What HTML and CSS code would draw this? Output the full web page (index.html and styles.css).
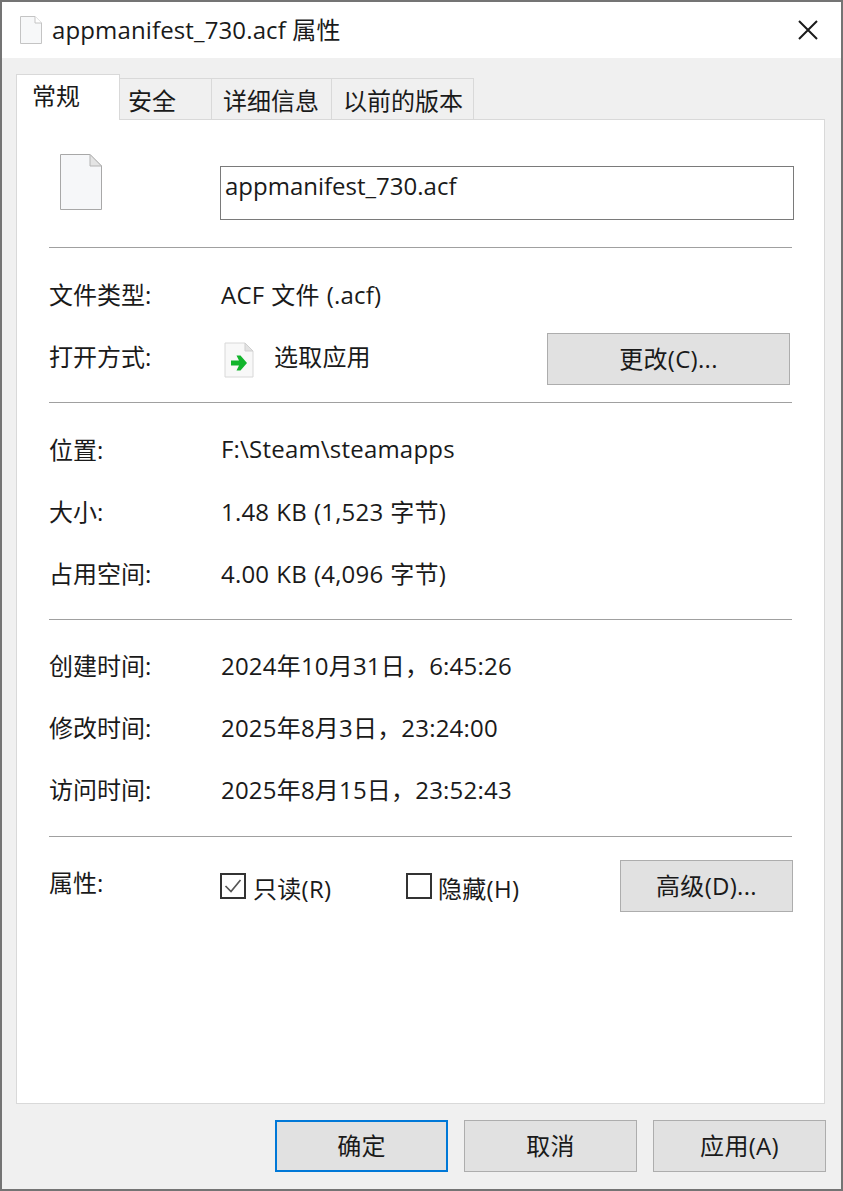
FILE: index.html
```html
<!DOCTYPE html>
<html lang="zh-CN">
<head>
    <meta charset="UTF-8">
    <title>appmanifest_730.acf 属性</title>
    <link rel="stylesheet" href="styles.css">
</head>
<body>
    <div class="window">
        <div class="titlebar">
            <svg class="title-icon" viewBox="0 0 22 28">
                <path d="M0.5 0.5H15L21.5 7V27.5H0.5Z" fill="#f7f8f9" stroke="#c4c4c4"/>
                <path d="M15 0.5V7H21.5" fill="#fff" stroke="#c4c4c4"/>
            </svg>
            <span class="title-text">appmanifest_730.acf 属性</span>
            <svg class="close-icon" viewBox="0 0 20 20">
                <path d="M1 1L19 19M19 1L1 19" stroke="#1a1a1a" stroke-width="2" fill="none"/>
            </svg>
        </div>
        <div class="content">
            <div class="tabs">
                <div class="tab active">常规</div>
                <div class="tab tab-security">安全</div>
                <div class="tab tab-details">详细信息</div>
                <div class="tab tab-versions">以前的版本</div>
            </div>
            <div class="panel">
                <div class="section name-section">
                    <svg class="file-icon" viewBox="0 0 42 56">
                        <path d="M0.5 0.5H30L41.5 12V55.5H0.5Z" fill="#f6f7f9" stroke="#a8a8a8"/>
                        <path d="M30 0.5V12H41.5Z" fill="#e4e4e4" stroke="#b4b4b4"/>
                    </svg>
                    <div class="name-input">appmanifest_730.acf</div>
                </div>
                <div class="section">
                    <div class="row">
                        <div class="label">文件类型:</div>
                        <div class="value">ACF 文件 (.acf)</div>
                    </div>
                    <div class="row">
                        <div class="label">打开方式:</div>
                        <div class="value open-with">
                            <svg class="app-icon" viewBox="0 0 30 36">
                                <path d="M1 1H21L29 9V35H1Z" fill="#f8f8f8" stroke="#d8d8d8"/>
                                <path d="M21 1V9H29Z" fill="#e2e2e2" stroke="#cfcfcf"/>
                                <path d="M7 18.500H15L12.500 13.500H16.500L23 21L16.500 28.500H12.500L15 23.500H7Z" fill="#12b52c"/>
                            </svg>
                            <span>选取应用</span>
                        </div>
                        <button class="btn btn-change">更改(C)...</button>
                    </div>
                </div>
                <div class="section">
                    <div class="row">
                        <div class="label">位置:</div>
                        <div class="value">F:\Steam\steamapps</div>
                    </div>
                    <div class="row">
                        <div class="label">大小:</div>
                        <div class="value">1.48 KB (1,523 字节)</div>
                    </div>
                    <div class="row">
                        <div class="label">占用空间:</div>
                        <div class="value">4.00 KB (4,096 字节)</div>
                    </div>
                </div>
                <div class="section dates">
                    <div class="row">
                        <div class="label">创建时间:</div>
                        <div class="value">2024年10月31日，6:45:26</div>
                    </div>
                    <div class="row">
                        <div class="label">修改时间:</div>
                        <div class="value">2025年8月3日，23:24:00</div>
                    </div>
                    <div class="row">
                        <div class="label">访问时间:</div>
                        <div class="value">2025年8月15日，23:52:43</div>
                    </div>
                </div>
                <div class="attrs">
                    <div class="label attrs-label">属性:</div>
                    <div class="check check-readonly">
                        <span class="box">
                            <svg viewBox="0 0 22 22"><path d="M3.500 11L9 16.500L18.500 5" stroke="#555" stroke-width="1.700" fill="none"/></svg>
                        </span>
                        <span class="check-text">只读(R)</span>
                    </div>
                    <div class="check check-hidden">
                        <span class="box"></span>
                        <span class="check-text">隐藏(H)</span>
                    </div>
                    <button class="btn btn-advanced">高级(D)...</button>
                </div>
            </div>
            <div class="footer">
                <button class="btn btn-footer default">确定</button>
                <button class="btn btn-footer">取消</button>
                <button class="btn btn-footer">应用(A)</button>
            </div>
        </div>
    </div>
</body>
</html>
```

FILE: styles.css
```css
* {
    box-sizing: border-box;
}
html, body {
    height: 100%;
}
body {
    margin: 0;
    font-family: "Open Sans", "Noto Sans CJK SC", sans-serif;
    font-size: 24px;
    color: #1a1a1a;
    background: #fff;
}
.window {
    height: 100vh;
    display: flex;
    flex-direction: column;
    border: 2px solid #747474;
}
.titlebar {
    height: 56px;
    flex: none;
    display: flex;
    align-items: center;
    background: #fff;
    padding-left: 18px;
}
.title-icon {
    width: 22px;
    height: 28px;
    margin-right: 10px;
}
.title-text {
    flex: 1;
    margin-top: -3px;
    letter-spacing: 0.13px;
}
.close-icon {
    width: 20px;
    height: 20px;
    margin-right: 23px;
}
.content {
    flex: 1;
    display: flex;
    flex-direction: column;
    background: #f0f0f0;
    padding: 16px 16px 0 14px;
}
.tabs {
    display: flex;
    align-items: flex-end;
    height: 46px;
    flex: none;
    margin-bottom: -1px;
    position: relative;
    z-index: 1;
}
.tab {
    height: 42px;
    border: 1px solid #d9d9d9;
    border-left: none;
    border-bottom: none;
    line-height: 43px;
    white-space: nowrap;
}
.tab.active {
    width: 104px;
    height: 46px;
    background: #fff;
    border-left: 1px solid #d9d9d9;
    line-height: 42px;
    padding-left: 15px;
}
.tab-security {
    width: 92px;
    padding-left: 8px;
}
.tab-details {
    width: 120px;
    padding-left: 11px;
}
.tab-versions {
    width: 142px;
    padding-left: 11px;
}
.panel {
    flex: 1;
    background: #fff;
    border: 1px solid #d9d9d9;
    padding: 0 32px;
}
.section {
    border-bottom: 1px solid #a0a0a0;
    padding: 16px 0 14px;
}
.dates {
    padding: 15px 0;
}
.name-section {
    height: 128px;
    padding: 0;
    display: flex;
}
.file-icon {
    width: 42px;
    height: 56px;
    margin: 34px 0 0 11px;
}
.name-input {
    width: 574px;
    height: 54px;
    margin: 46px -2px 0 118px;
    border: 1px solid #7a7a7a;
    padding: 2px 4px;
}
.row {
    height: 62px;
    display: flex;
    align-items: center;
}
.label {
    width: 172px;
    flex: none;
    margin-top: -4px;
}
.value {
    flex: 1;
    margin-top: -4px;
    letter-spacing: 0.2px;
    word-spacing: 0.6px;
}
.open-with {
    display: flex;
    align-items: center;
}
.app-icon {
    width: 30px;
    height: 36px;
    margin: 10px 20px 0 3px;
}
.btn {
    height: 52px;
    border: 1px solid #adadad;
    background: #e1e1e1;
    font: inherit;
    color: inherit;
    padding: 0 0 3px;
    letter-spacing: 0.3px;
}
.btn-change {
    width: 243px;
    margin: 4px 2px 0 0;
}
.attrs {
    display: flex;
    align-items: center;
    height: 52px;
    margin-top: 23px;
}
.attrs-label {
    margin-top: -9px;
}
.check {
    display: flex;
    align-items: center;
    gap: 7px;
}
.check-text {
    margin-top: 2px;
    letter-spacing: 0.3px;
}
.check-readonly {
    width: 186px;
    margin-left: -1px;
}
.check-hidden {
    width: 214px;
    gap: 6px;
}
.box {
    width: 26px;
    height: 26px;
    border: 2px solid #333;
    background: #fff;
}
.box svg {
    display: block;
    width: 22px;
    height: 22px;
}
.btn-advanced {
    width: 173px;
    margin-right: -1px;
}
.footer {
    height: 85px;
    flex: none;
    display: flex;
    justify-content: flex-end;
    gap: 16px;
    padding-top: 16px;
    margin-right: -16px;
    padding-right: 15px;
}
.btn-footer {
    width: 173px;
}
.default {
    border: 2px solid #0078d7;
}
```
